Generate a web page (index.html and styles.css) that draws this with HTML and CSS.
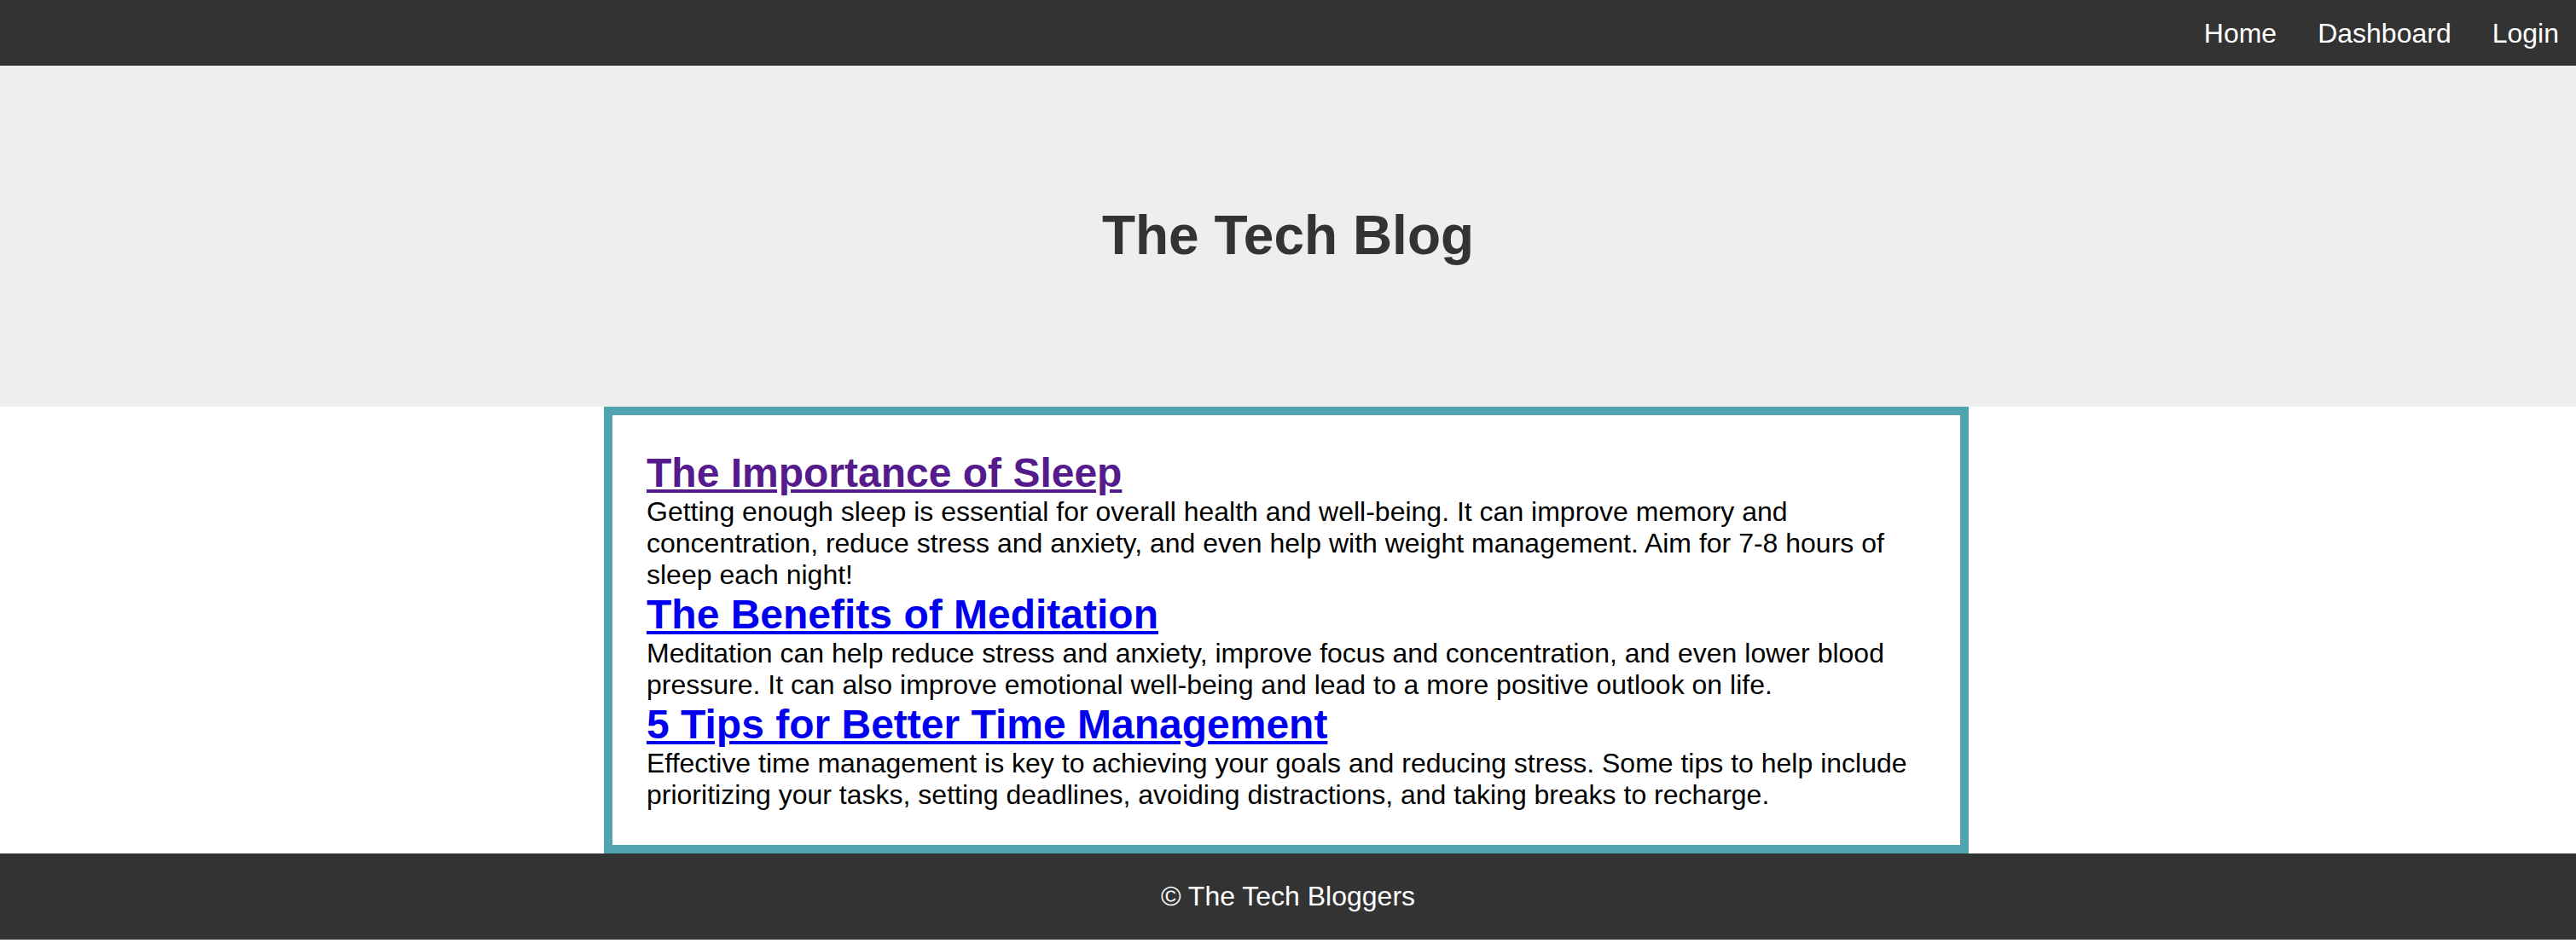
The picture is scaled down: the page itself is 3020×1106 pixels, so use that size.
FILE: index.html
```html
<!DOCTYPE html>
<html lang="en">
<head>
<meta charset="utf-8">
<title>The Tech Blog</title>
<link rel="stylesheet" href="styles.css">
</head>
<body>
<nav class="topnav">
  <a class="nav-link" href="#">Home</a>
  <a class="nav-link" href="#">Dashboard</a>
  <a class="nav-link" href="#">Login</a>
</nav>
<header class="hero">
  <h1 class="hero-title">The Tech Blog</h1>
</header>
<main class="posts">
  <article class="post">
    <h2 class="post-title"><a class="post-link visited" href="#">The Importance of Sleep</a></h2>
    <p class="post-body">Getting enough sleep is essential for overall health and well-being. It can improve memory and concentration, reduce stress and anxiety, and even help with weight management. Aim for 7-8 hours of sleep each night!</p>
  </article>
  <article class="post">
    <h2 class="post-title"><a class="post-link" href="#">The Benefits of Meditation</a></h2>
    <p class="post-body">Meditation can help reduce stress and anxiety, improve focus and concentration, and even lower blood pressure. It can also improve emotional well-being and lead to a more positive outlook on life.</p>
  </article>
  <article class="post">
    <h2 class="post-title"><a class="post-link" href="#">5 Tips for Better Time Management</a></h2>
    <p class="post-body">Effective time management is key to achieving your goals and reducing stress. Some tips to help include prioritizing your tasks, setting deadlines, avoiding distractions, and taking breaks to recharge.</p>
  </article>
</main>
<footer class="site-footer">© The Tech Bloggers</footer>
</body>
</html>
```
FILE: styles.css
```css
* { box-sizing: border-box; }
html, body {
  margin: 0;
  padding: 0;
}
body {
  font-family: "Liberation Sans", Arial, sans-serif;
  font-size: 32px;
  color: #000;
  background: #fff;
}
.topnav {
  background: #333;
  display: flex;
  justify-content: flex-end;
  gap: 48px;
  padding: 21px 20px 19px;
}
.nav-link {
  color: #fff;
  text-decoration: none;
  font-size: 32px;
}
.hero {
  background: #eee;
  padding: 162px 0 164px;
  text-align: center;
}
.hero-title {
  margin: 0;
  font-size: 64px;
  font-weight: bold;
  color: #333;
}
.posts {
  width: 1600px;
  margin: 0 auto;
  border: 10px solid #4fa4af;
  padding: 40px;
  position: relative;
  left: -2px;
}
.post-title {
  margin: 0;
  font-size: 48px;
  font-weight: bold;
}
.post-link {
  color: #0000ee;
  text-decoration: underline;
}
.post-link.visited {
  color: #551a8b;
}
.post-body {
  margin: 0;
  font-size: 32px;
}
.site-footer {
  background: #333;
  color: #fff;
  text-align: center;
  padding: 32px 0;
  font-size: 32px;
}
```
